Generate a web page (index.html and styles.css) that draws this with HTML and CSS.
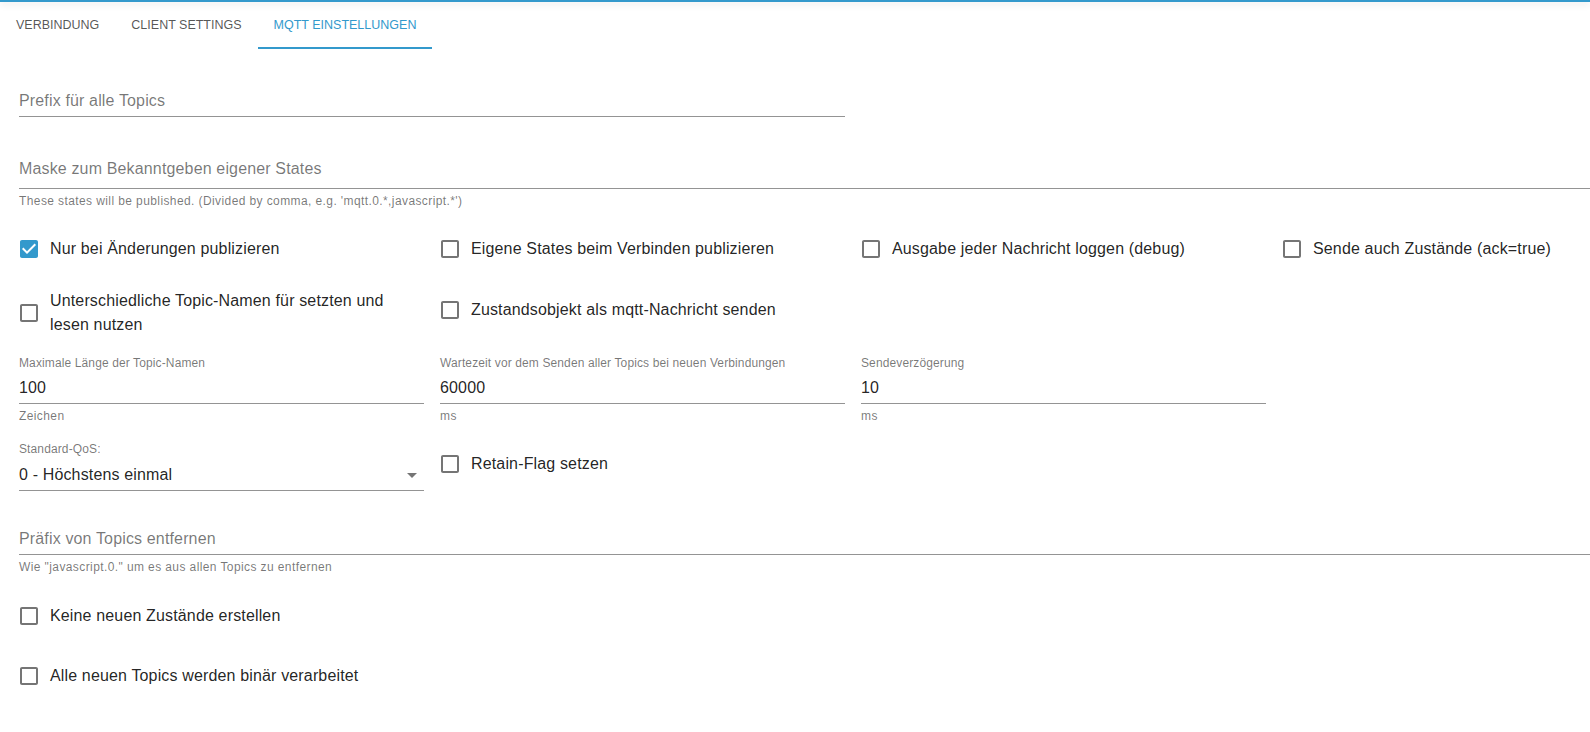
FILE: index.html
```html
<!DOCTYPE html>
<html lang="de">
<head>
<meta charset="utf-8">
<title>MQTT Einstellungen</title>
<link rel="stylesheet" href="styles.css">
</head>
<body>
<div class="topbar"></div>
<nav class="tabs">
  <div class="tab">VERBINDUNG</div>
  <div class="tab">CLIENT SETTINGS</div>
  <div class="tab active">MQTT EINSTELLUNGEN</div>
</nav>

<main class="form">
  <div class="field half f-prefix">
    <div class="input empty">Prefix für alle Topics</div>
  </div>

  <div class="field full f-mask">
    <div class="input empty">Maske zum Bekanntgeben eigener States</div>
    <div class="helper">These states will be published. (Divided by comma, e.g. 'mqtt.0.*,javascript.*')</div>
  </div>

  <div class="row r-checks1">
    <label class="check">
      <span class="box"><svg viewBox="0 0 24 24" class="on"><path d="M19 3H5c-1.11 0-2 .9-2 2v14c0 1.1.89 2 2 2h14c1.11 0 2-.9 2-2V5c0-1.1-.89-2-2-2zm-9 14l-5-5 1.41-1.41L10 14.17l7.590-7.59L19 8l-9 9z"/></svg></span>
      <span class="text">Nur bei Änderungen publizieren</span>
    </label>
    <label class="check">
      <span class="box"><svg viewBox="0 0 24 24"><path d="M19 5v14H5V5h14m0-2H5c-1.11 0-2 .9-2 2v14c0 1.1.89 2 2 2h14c1.11 0 2-.9 2-2V5c0-1.1-.89-2-2-2z"/></svg></span>
      <span class="text">Eigene States beim Verbinden publizieren</span>
    </label>
    <label class="check">
      <span class="box"><svg viewBox="0 0 24 24"><path d="M19 5v14H5V5h14m0-2H5c-1.11 0-2 .9-2 2v14c0 1.1.89 2 2 2h14c1.11 0 2-.9 2-2V5c0-1.1-.89-2-2-2z"/></svg></span>
      <span class="text">Ausgabe jeder Nachricht loggen (debug)</span>
    </label>
    <label class="check">
      <span class="box"><svg viewBox="0 0 24 24"><path d="M19 5v14H5V5h14m0-2H5c-1.11 0-2 .9-2 2v14c0 1.1.89 2 2 2h14c1.11 0 2-.9 2-2V5c0-1.1-.89-2-2-2z"/></svg></span>
      <span class="text">Sende auch Zustände (ack=true)</span>
    </label>
  </div>

  <div class="row r-checks2">
    <label class="check">
      <span class="box"><svg viewBox="0 0 24 24"><path d="M19 5v14H5V5h14m0-2H5c-1.11 0-2 .9-2 2v14c0 1.1.89 2 2 2h14c1.11 0 2-.9 2-2V5c0-1.1-.89-2-2-2z"/></svg></span>
      <span class="text">Unterschiedliche Topic-Namen für setzten und lesen nutzen</span>
    </label>
    <label class="check">
      <span class="box"><svg viewBox="0 0 24 24"><path d="M19 5v14H5V5h14m0-2H5c-1.11 0-2 .9-2 2v14c0 1.1.89 2 2 2h14c1.11 0 2-.9 2-2V5c0-1.1-.89-2-2-2z"/></svg></span>
      <span class="text">Zustandsobjekt als mqtt-Nachricht senden</span>
    </label>
  </div>

  <div class="row r-numbers">
    <div class="field">
      <div class="label">Maximale Länge der Topic-Namen</div>
      <div class="input value">100</div>
      <div class="helper">Zeichen</div>
    </div>
    <div class="field">
      <div class="label">Wartezeit vor dem Senden aller Topics bei neuen Verbindungen</div>
      <div class="input value">60000</div>
      <div class="helper">ms</div>
    </div>
    <div class="field">
      <div class="label">Sendeverzögerung</div>
      <div class="input value">10</div>
      <div class="helper">ms</div>
    </div>
  </div>

  <div class="row r-qos">
    <div class="field">
      <div class="label">Standard-QoS:</div>
      <div class="input value select">0 - Höchstens einmal<svg class="arrow" viewBox="0 0 24 24"><path d="M7 10l5 5 5-5z"/></svg></div>
    </div>
    <label class="check retain">
      <span class="box"><svg viewBox="0 0 24 24"><path d="M19 5v14H5V5h14m0-2H5c-1.11 0-2 .9-2 2v14c0 1.1.89 2 2 2h14c1.11 0 2-.9 2-2V5c0-1.1-.89-2-2-2z"/></svg></span>
      <span class="text">Retain-Flag setzen</span>
    </label>
  </div>

  <div class="field full f-strip">
    <div class="input empty">Präfix von Topics entfernen</div>
    <div class="helper">Wie "javascript.0." um es aus allen Topics zu entfernen</div>
  </div>

  <label class="check single c-keine">
    <span class="box"><svg viewBox="0 0 24 24"><path d="M19 5v14H5V5h14m0-2H5c-1.11 0-2 .9-2 2v14c0 1.1.89 2 2 2h14c1.11 0 2-.9 2-2V5c0-1.1-.89-2-2-2z"/></svg></span>
    <span class="text">Keine neuen Zustände erstellen</span>
  </label>

  <label class="check single c-alle">
    <span class="box"><svg viewBox="0 0 24 24"><path d="M19 5v14H5V5h14m0-2H5c-1.11 0-2 .9-2 2v14c0 1.1.89 2 2 2h14c1.11 0 2-.9 2-2V5c0-1.1-.89-2-2-2z"/></svg></span>
    <span class="text">Alle neuen Topics werden binär verarbeitet</span>
  </label>
</main>
</body>
</html>
```

FILE: styles.css
```css
html, body {
  margin: 0;
  padding: 0;
  overflow: hidden;
  background: #ffffff;
}
body {
  font-family: "Liberation Sans", Arial, sans-serif;
  color: rgba(0, 0, 0, 0.87);
  width: 1590px;
  height: 732px;
}

.topbar {
  height: 2px;
  background: #3399cc;
  box-shadow: 0 2px 7px rgba(0, 0, 0, 0.16);
  position: relative;
  z-index: 1;
}

.tabs {
  display: flex;
  height: 47px;
}
.tab {
  position: relative;
  display: flex;
  align-items: center;
  padding: 0 16px 2px;
  font-size: 12.5px;
  color: rgba(0, 0, 0, 0.68);
  white-space: nowrap;
}
.tab.active {
  color: #3399cc;
}
.tab.active::after {
  content: "";
  position: absolute;
  left: 0;
  right: 0;
  bottom: 0;
  height: 2px;
  background: #3399cc;
}

.form {
  display: flex;
  flex-direction: column;
  align-items: flex-start;
  padding-left: 19px;
  width: 1571px;
}

.field {
  display: flex;
  flex-direction: column;
}
.field.half { width: 826px; }
.field.full { width: 100%; }

.input {
  font-size: 16px;
  line-height: 19px;
  letter-spacing: 0.15px;
  border-bottom: 1px solid #949494;
  white-space: nowrap;
}
.input.empty {
  color: rgba(0, 0, 0, 0.54);
  padding: 22px 0 6px;
}
.input.value {
  padding: 7px 0 6px;
}
.input.select {
  position: relative;
  padding-top: 8px;
}
.arrow {
  position: absolute;
  right: 0;
  top: 6px;
  width: 24px;
  height: 24px;
  fill: rgba(0, 0, 0, 0.54);
}

.label {
  font-size: 12px;
  line-height: 16px;
  letter-spacing: 0.12px;
  color: rgba(0, 0, 0, 0.54);
  white-space: nowrap;
}
.helper {
  font-size: 12px;
  line-height: 20px;
  letter-spacing: 0.4px;
  margin-top: 2px;
  color: rgba(0, 0, 0, 0.54);
  white-space: nowrap;
}

.f-prefix { margin-top: 20px; }
.f-mask { margin-top: 19px; }
.f-mask .input { padding-top: 23px; padding-bottom: 10px; }

.row {
  display: grid;
  grid-template-columns: repeat(3, 405px) minmax(0, 1fr);
  column-gap: 16px;
  align-items: start;
  width: 100%;
}
.r-checks1 { margin-top: 16.5px; }
.r-checks2 { margin-top: 19.5px; }
.r-numbers { margin-top: 17.5px; }
.r-qos { margin-top: 15px; }
.retain { margin-top: 2.5px; }

.f-strip { margin-top: 17px; }
.f-strip .input { padding-top: 21px; padding-bottom: 6px; }

.c-keine { margin-top: 18px; }
.c-alle { margin-top: 18.5px; }

.check {
  display: flex;
  align-items: center;
  margin-left: -11px;
  margin-right: 16px;
  cursor: pointer;
}
.box {
  flex: none;
  width: 24px;
  height: 24px;
  padding: 9px;
}
.box svg {
  display: block;
  width: 24px;
  height: 24px;
  fill: rgba(0, 0, 0, 0.54);
}
.box svg.on {
  fill: #3399cc;
}
.check .text {
  font-size: 16px;
  line-height: 24px;
  letter-spacing: 0.15px;
  color: rgba(0, 0, 0, 0.87);
}
```
